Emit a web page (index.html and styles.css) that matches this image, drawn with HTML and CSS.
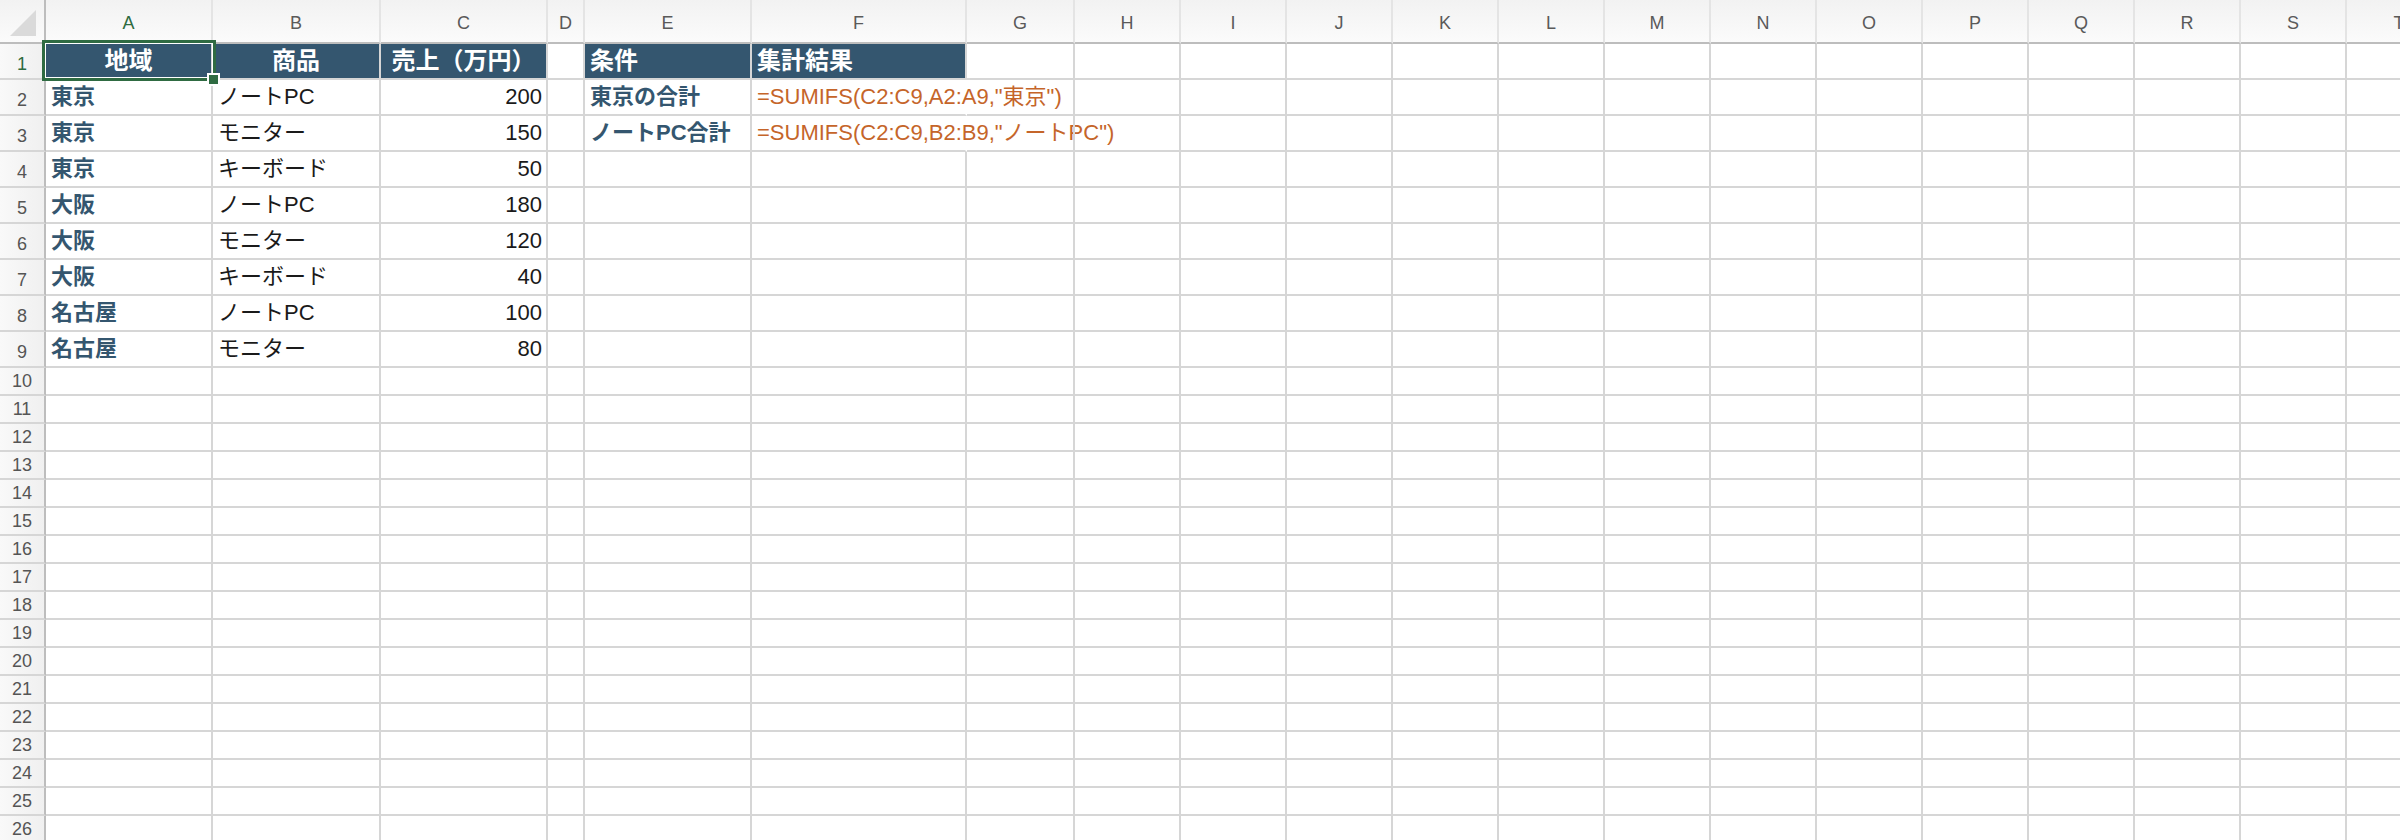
FILE: index.html
```html
<!DOCTYPE html>
<html lang="ja">
<head>
    <meta charset="UTF-8">
    <meta name="viewport" content="width=device-width, initial-scale=1.0">
    <title>SUMIFS 集計</title>
    <link rel="stylesheet" href="styles.css">
</head>
<body>
    <div class="sheet" id="sheet"></div>

    <script>
        const columns = 'ABCDEFGHIJKLMNOPQRST'.split('');
        const rowCount = 26;
        const tallRows = 9;

        // Sheet contents, keyed by cell address
        const cells = {
            A1: { text: '地域', cls: 'fill center selected' },
            B1: { text: '商品', cls: 'fill center' },
            C1: { text: '売上（万円）', cls: 'fill center' },
            E1: { text: '条件', cls: 'fill' },
            F1: { text: '集計結果', cls: 'fill' },
            E2: { text: '東京の合計', cls: 'label' },
            F2: { text: '=SUMIFS(C2:C9,A2:A9,"東京")', cls: 'formula spill' },
            E3: { text: 'ノートPC合計', cls: 'label' },
            F3: { text: '=SUMIFS(C2:C9,B2:B9,"ノートPC")', cls: 'formula spill' }
        };

        const sales = [
            ['東京', 'ノートPC', 200],
            ['東京', 'モニター', 150],
            ['東京', 'キーボード', 50],
            ['大阪', 'ノートPC', 180],
            ['大阪', 'モニター', 120],
            ['大阪', 'キーボード', 40],
            ['名古屋', 'ノートPC', 100],
            ['名古屋', 'モニター', 80]
        ];

        sales.forEach((row, i) => {
            const r = i + 2;
            cells['A' + r] = { text: row[0], cls: 'label' };
            cells['B' + r] = { text: row[1] };
            cells['C' + r] = { text: row[2], cls: 'num' };
        });

        const sheet = document.getElementById('sheet');

        function addCell(text, cls) {
            const div = document.createElement('div');
            div.className = 'cell ' + (cls || '');
            div.textContent = text;
            sheet.appendChild(div);
            return div;
        }

        // Column headers
        const corner = addCell('', 'col-head corner');
        const mark = document.createElement('span');
        mark.className = 'corner-mark';
        corner.appendChild(mark);
        columns.forEach(col => {
            addCell(col, 'col-head' + (col === 'A' ? ' active' : ''));
        });

        // Rows
        for (let r = 1; r <= rowCount; r++) {
            addCell(r, 'row-head' + (r <= tallRows ? ' tall' : '') + (r === 1 ? ' active' : ''));
            columns.forEach(col => {
                const data = cells[col + r];
                const cell = addCell(data ? data.text : '', data ? data.cls : '');
                if (data && data.cls && data.cls.includes('selected')) {
                    const handle = document.createElement('span');
                    handle.className = 'handle';
                    cell.appendChild(handle);
                }
            });
        }
    </script>
</body>
</html>
```

FILE: styles.css
```css
body {
    margin: 0;
    overflow: hidden;
    background: #fff;
    font-family: "Liberation Sans", "Noto Sans CJK JP", sans-serif;
}
.sheet {
    display: grid;
    grid-template-columns: 46px 167px 168px 167px 37px 167px 215px 108px repeat(13, 106px);
    grid-template-rows: 44px repeat(9, 36px) repeat(17, 28px);
    width: max-content;
}
.cell {
    display: flex;
    align-items: center;
    box-sizing: border-box;
    padding: 0 5px;
    border-right: 2px solid #d6d6d6;
    border-bottom: 2px solid #d6d6d6;
    font-size: 22px;
    line-height: 1;
    white-space: nowrap;
    color: #1a1a1a;
}
.col-head {
    justify-content: center;
    padding-top: 3px;
    background: linear-gradient(#f2f2f2, #fbfbfb);
    border-right-color: #e4e4e4;
    border-bottom-color: #bdbdbd;
    font-size: 18px;
    color: #5a5a5a;
}
.corner {
    justify-content: flex-end;
    align-items: flex-end;
    padding: 0 8px 6px 0;
    border-right-color: #bdbdbd;
}
.corner-mark {
    width: 26px;
    height: 26px;
    background: #dadada;
    clip-path: polygon(100% 0, 100% 100%, 0 100%);
}
.row-head {
    justify-content: center;
    padding: 0;
    background: linear-gradient(to right, #f9f9f9, #f0f0f0);
    border-right-color: #bdbdbd;
    font-size: 18px;
    color: #555;
}
.row-head.tall {
    padding-top: 5px;
}
.active {
    color: #2e6b3f;
}
.fill {
    background: #34566f;
    color: #fff;
    font-weight: bold;
    font-size: 24px;
}
.center {
    justify-content: center;
}
.label {
    color: #34566f;
    font-weight: bold;
}
.num {
    justify-content: flex-end;
    padding-right: 4px;
}
.formula {
    color: #c5652a;
}
.spill {
    border-right-color: transparent;
}
.selected {
    position: relative;
}
.selected::before {
    content: "";
    position: absolute;
    top: -4px;
    left: -4px;
    right: -5px;
    bottom: -3px;
    border: 3px solid #2f6b42;
    box-shadow: inset 0 0 0 1px #fff;
}
.handle {
    position: absolute;
    right: -9px;
    bottom: -8px;
    width: 9px;
    height: 9px;
    background: #2f6b42;
    border: 2px solid #fff;
}
```
